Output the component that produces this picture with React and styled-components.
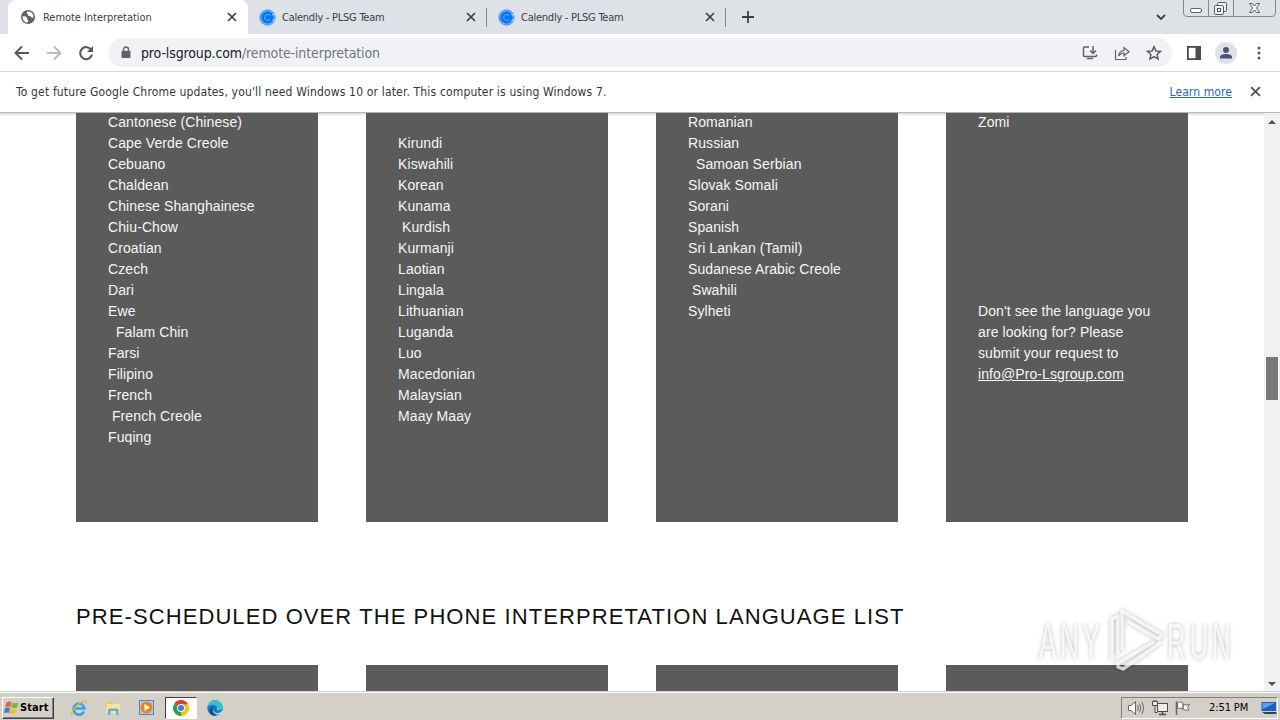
import styled, { createGlobalStyle } from 'styled-components'

const columns = [
  {
    lines: [
      'Cantonese (Chinese)', 'Cape Verde Creole', 'Cebuano', 'Chaldean', 'Chinese Shanghainese',
      'Chiu-Chow', 'Croatian', 'Czech', 'Dari', 'Ewe', '  Falam Chin', 'Farsi', 'Filipino',
      'French', ' French Creole', 'Fuqing',
    ],
  },
  {
    lines: [
      '', 'Kirundi', 'Kiswahili', 'Korean', 'Kunama', ' Kurdish', 'Kurmanji', 'Laotian', 'Lingala',
      'Lithuanian', 'Luganda', 'Luo', 'Macedonian', 'Malaysian', 'Maay Maay',
    ],
  },
  {
    lines: [
      'Romanian', 'Russian', '  Samoan Serbian', 'Slovak Somali', 'Sorani', 'Spanish',
      'Sri Lankan (Tamil)', 'Sudanese Arabic Creole', ' Swahili', 'Sylheti',
    ],
  },
  {
    lines: [
      'Zomi', '', '', '', '', '', '', '', '', "Don't see the language you",
      'are looking for? Please', 'submit your request to',
    ],
    mail: 'info@Pro-Lsgroup.com',
  },
]

const CloseIcon = ({ size = 10, color = '#3c4043', width = 1.7 }) => (
  <svg width={size} height={size} viewBox="0 0 10 10">
    <path d="M1 1L9 9M9 1L1 9" stroke={color} strokeWidth={width} fill="none" />
  </svg>
)

const GlobeIcon = () => (
  <svg width="16" height="16" viewBox="0 0 16 16">
    <circle cx="8" cy="8" r="7" fill="#5f6368" />
    <path d="M2.600 7.200l3.200.3 1.400 1.600-.2 1.300 1.300.6-.6 2.600C4.700 13.500 2.400 11 2.600 7.200zM7.400 2.500l-.8 1.700 1.300 1 .2 1.500 2.100.3 1 1.300 2.200.4c.6-3.600-2.300-6.400-6-6.200z" fill="#fff" />
  </svg>
)

const CalendlyIcon = () => (
  <svg width="17" height="17" viewBox="0 0 17 17">
    <circle cx="8.500" cy="8.500" r="7.600" fill="#8fc2fb" stroke="#1683f8" strokeWidth="0.900" />
    <circle cx="8.500" cy="8.500" r="6.200" fill="#0a73f5" />
    <path d="M11.300 6.500C9.900 5 5.700 4.900 5.500 8.500c.2 3.600 4.400 3.500 5.800 2" fill="none" stroke="#35a4ff" strokeWidth="1.300" />
    <path d="M13.500 5.800h3M13.500 11.200h3" stroke="#cfe3fb" strokeWidth="1" />
  </svg>
)

const ArrowIcon = ({ color, flip }) => (
  <svg width="16" height="16" viewBox="0 0 16 16">
    <path d={flip ? 'M1 8H14M8 1.500L14.500 8L8 14.500' : 'M15 8H2M8 1.500L1.500 8L8 14.500'} stroke={color} strokeWidth="1.900" fill="none" />
  </svg>
)

const ReloadIcon = () => (
  <svg width="16" height="16" viewBox="0 0 16 16">
    <path d="M13.300 5A6 6 0 1 0 14 9.500" stroke="#54585c" strokeWidth="2" fill="none" />
    <path d="M15 1V7H9z" fill="#54585c" />
  </svg>
)

const LockIcon = () => (
  <svg width="10" height="13" viewBox="0 0 10 13">
    <path d="M2.500 5V3.500a2.500 2.500 0 0 1 5 0V5" stroke="#5f6368" strokeWidth="1.400" fill="none" />
    <rect x="0.500" y="4.700" width="9" height="7.300" rx="1" fill="#5f6368" />
  </svg>
)

const InstallIcon = () => (
  <svg width="16" height="16" viewBox="0 0 16 16" fill="none" stroke="#5f6368" strokeWidth="1.500">
    <path d="M7 2H2.500Q1.500 2 1.500 3V10.500Q1.500 11.500 2.500 11.500H13.500Q14.500 11.500 14.500 10.500V9.500" />
    <path d="M11 1V8M8 5.500L11 8.500L14 5.500M5 13.500H11" />
  </svg>
)

const ShareIcon = () => (
  <svg width="16" height="16" viewBox="0 0 16 16" fill="none" stroke="#5f6368" strokeWidth="1.200">
    <path d="M1.500 5V14.500H12V12" />
    <path d="M4.500 11C5 7.500 7 5.700 10 5.500V2.500L15 6.700L10 10.700V8C7.500 8 6 8.800 4.500 11z" />
  </svg>
)

const StarIcon = () => (
  <svg width="16" height="16" viewBox="0 0 16 16">
    <path d="M8 1.600L9.900 6L14.600 6.400L11 9.500L12.100 14.100L8 11.600L3.900 14.100L5 9.500L1.400 6.400L6.100 6z" fill="none" stroke="#54585c" strokeWidth="1.400" />
  </svg>
)

const PanelIcon = () => (
  <svg width="14" height="14" viewBox="0 0 14 14">
    <rect x="0.900" y="0.900" width="12.200" height="12.200" fill="#fff" stroke="#4a4d51" strokeWidth="1.800" />
    <rect x="8.500" y="1" width="5" height="12" fill="#4a4d51" />
  </svg>
)

const PersonIcon = () => (
  <svg width="22" height="22" viewBox="0 0 22 22">
    <circle cx="11" cy="11" r="11" fill="#dee1e6" />
    <circle cx="11" cy="8" r="3" fill="#485575" />
    <path d="M5 16.500V15C5 12.800 8.500 12 11 12s6 .8 6 3v1.500z" fill="#485575" />
  </svg>
)

const WindowButtons = () => (
  <svg width="94" height="17" viewBox="0 0 94 17" fill="none" stroke="#85878c">
    <path d="M.5 0V13Q.5 16.500 4 16.500H89Q92.500 16.500 92.500 13V0M25.500 0V16M50.500 0V16" />
    <rect x="7.500" y="8.500" width="11" height="4" rx="1.500" fill="#fff" stroke="#60636a" />
    <g stroke="#55585f" fill="#eef0f3">
      <rect x="34.500" y="2.500" width="9" height="9" rx="1" />
      <rect x="31.500" y="5.500" width="9" height="9" rx="1" />
      <rect x="34.500" y="8.500" width="3" height="3" />
    </g>
    <path d="M66.500 3.500H69.500L71.500 6L73.500 3.500H76.500L73.500 8L76.500 12.500H73.500L71.500 10L69.500 12.500H66.500L69.500 8z" fill="#f6f7f9" stroke="#60636a" />
  </svg>
)

const WindowsFlag = () => (
  <svg width="17" height="16" viewBox="0 0 17 16">
    <path d="M3.500 2.500Q6 .8 8.500 2.300L7.300 7.200Q5 5.800 2.300 7.300z" fill="#e8642a" />
    <path d="M9.300 2.700Q12 4 15.500 2.300L14.200 7.200Q11 8.800 8.100 7.500z" fill="#7ab648" />
    <path d="M2 8.300Q4.500 6.800 7.100 8.200L5.900 13Q3.500 11.700.8 13.200z" fill="#3a7fd0" />
    <path d="M7.900 8.500Q11 9.800 14 8.200L12.700 13Q9.500 14.700 6.700 13.400z" fill="#f5bd2b" />
  </svg>
)

const IeIcon = () => (
  <svg width="18" height="18" viewBox="0 0 18 18" fill="none">
    <path d="M14 12.500A5.500 5.500 0 1 1 14.500 9.500H5" stroke="#37a5e5" strokeWidth="2.700" />
    <path d="M2.500 15.800C-.5 14 5 7.500 9.500 4.500S17.500.7 16.300 4.500" stroke="#e8b632" strokeWidth="1.400" />
  </svg>
)

const FolderIcon = () => (
  <svg width="18" height="18" viewBox="0 0 18 18">
    <path d="M2 3H7L8.500 4.500H15V13H2z" fill="#e8c75e" />
    <path d="M3 5H16V14H1.500z" fill="#f7e39a" />
    <path d="M4 16V11Q4 9.500 5.500 9.500H13Q14.500 9.500 14.500 11V16H12V12H6.500V16z" fill="#62afd8" />
  </svg>
)

const PlayerIcon = () => (
  <svg width="18" height="18" viewBox="0 0 18 18">
    <rect x="1.500" y="1.500" width="14" height="14" fill="#a9cdee" stroke="#5388bd" />
    <circle cx="8.500" cy="8.500" r="6" fill="#ef8218" />
    <path d="M6.500 5L12 8.500L6.500 12z" fill="#fff" />
  </svg>
)

const ChromeIcon = () => (
  <svg width="16" height="16" viewBox="0 0 16 16">
    <path d="M8 8L1.070 4A8 8 0 0 1 14.930 4z" fill="#e33b2e" />
    <path d="M8 8L14.930 4A8 8 0 0 1 8 16z" fill="#fbc116" />
    <path d="M8 8L8 16A8 8 0 0 1 1.070 4z" fill="#2da04b" />
    <path d="M8 4.400H15.100A8 8 0 0 1 8 16L11.100 9.800z" fill="#fbc116" />
    <circle cx="8" cy="8" r="3.900" fill="#fff" />
    <circle cx="8" cy="8" r="3" fill="#3c7df0" />
  </svg>
)

const EdgeIcon = () => (
  <svg width="16" height="16" viewBox="0 0 16 16">
    <circle cx="8" cy="8" r="7.700" fill="#1777cf" />
    <path d="M.4 7.500C1 3 4.300.3 8 .3c4.500 0 7.700 3.200 7.700 6.300 0 2.500-2 3.800-4 3.800-1.500 0-2.500-.6-2-1.400C11 6.500 8.500 4.800 6 4.800 3.500 4.800 1.300 6 .4 7.500z" fill="#36c3c8" />
    <path d="M6.200 8.300c-.6 3 2 5 4.700 4.700 1.700-.2 3-.9 4-2 1 0 .3 1.500-.8 2.500C11 16 4.500 14 6.200 8.300z" fill="#d4d0c8" />
    <path d="M4.300 14.800C.8 12.500 2.600 7 6.500 6.800 4.300 10 6 13.700 9.300 15.600 7.500 16 5.500 15.700 4.300 14.800z" fill="#124f9f" />
  </svg>
)

const SpeakerIcon = () => (
  <svg width="18" height="16" viewBox="0 0 18 16" fill="none" stroke="#6c6a66">
    <path d="M1.500 5.500H4L8.500 1.500V14.500L4 10.500H1.500z" fill="#fff" />
    <path d="M10.500 5Q12 8 10.500 11M12.500 3.500Q15 8 12.500 12.500M14.800 2Q18.300 8 14.800 14" />
  </svg>
)

const NetworkIcon = () => (
  <svg width="16" height="16" viewBox="0 0 16 16" fill="none" stroke="#4f4d49">
    <rect x="5.500" y="3.500" width="10" height="8" fill="#eee" />
    <path d="M7 14.500H14M10.500 12V14" strokeWidth="1.500" />
    <path d="M.5 1.500H5.500V5.500H.5zM3 5.500V12.500H5.500M2 0V1.500M4 0V1.500" fill="#eee" />
  </svg>
)

const FlagIcon = () => (
  <svg width="16" height="16" viewBox="0 0 16 16" fill="#fff" stroke="#6c6a66">
    <path d="M1.500 1.500V15" strokeWidth="1.600" />
    <path d="M2.500 2.500Q5 1 8 3V9Q5 7.500 2.500 8.500zM8 4.500Q11 6 14.500 4L12.500 7.500L14 10Q10.500 11 8 9z" />
  </svg>
)

const DesktopIcon = () => (
  <svg width="16" height="14" viewBox="0 0 16 14">
    <path d="M.5 1H15V10H.5z" fill="#1c5fbf" />
    <path d="M1.500 2H14L1.500 8z" fill="#5aa3ea" />
    <path d="M1 11H15.500V13H4z" fill="#26416b" />
  </svg>
)

const Watermark = () => (
  <WatermarkSvg width="240" height="80" viewBox="0 0 240 80">
    <g fill="#fff" fillOpacity="0.75" fontFamily="'Liberation Sans', Arial, sans-serif" fontSize="50" letterSpacing="7">
      <text transform="translate(9 61) scale(0.52 1)">ANY</text>
      <text transform="translate(137 61) scale(0.52 1)">RUN</text>
    </g>
    <g fill="none" stroke="#fff" strokeOpacity="0.75" strokeWidth="3.500" strokeLinejoin="round">
      <path d="M82 62V21L88 18V56" />
      <path d="M92 52V13L132 37L129 41L97 23" />
      <path d="M131 44L93 71L88 69V65L124 44" />
    </g>
  </WatermarkSvg>
)

const App = () => {
  return (
    <Screen>
      <GlobalStyle />
      <TabStrip>
        <Tab $active>
          <GlobeIcon />
          <TabTitle $active>Remote Interpretation</TabTitle>
          <CloseIcon />
        </Tab>
        <Tab>
          <CalendlyIcon />
          <TabTitle>Calendly - PLSG Team</TabTitle>
          <CloseIcon />
        </Tab>
        <Tab>
          <CalendlyIcon />
          <TabTitle>Calendly - PLSG Team</TabTitle>
          <CloseIcon />
        </Tab>
        <NewTab>
          <svg width="12" height="12" viewBox="0 0 12 12">
            <path d="M6 0V12M0 6H12" stroke="#3c4043" strokeWidth="1.800" />
          </svg>
        </NewTab>
        <TabSearch>
          <svg width="10" height="7" viewBox="0 0 10 7">
            <path d="M1 1L5 5L9 1" fill="none" stroke="#3c4043" strokeWidth="1.800" />
          </svg>
        </TabSearch>
        <WindowButtons />
      </TabStrip>

      <Toolbar>
        <NavButtons>
          <ArrowIcon color="#54585c" />
          <ArrowIcon color="#b9bbbe" flip />
          <ReloadIcon />
        </NavButtons>
        <AddressBar>
          <LockIcon />
          <Url><b>pro-lsgroup.com</b>/remote-interpretation</Url>
          <AddressActions>
            <InstallIcon />
            <ShareIcon />
            <StarIcon />
          </AddressActions>
        </AddressBar>
        <ToolbarActions>
          <PanelIcon />
          <PersonIcon />
          <svg width="4" height="14" viewBox="0 0 4 14" fill="#54585c">
            <circle cx="2" cy="2" r="1.500" />
            <circle cx="2" cy="7" r="1.500" />
            <circle cx="2" cy="12" r="1.500" />
          </svg>
        </ToolbarActions>
      </Toolbar>

      <InfoBar>
        <InfoText>To get future Google Chrome updates, you'll need Windows 10 or later. This computer is using Windows 7.</InfoText>
        <LearnMore>Learn more</LearnMore>
        <CloseIcon size={11} color="#54585c" width={1.8} />
      </InfoBar>

      <Viewport>
        <Page>
          <CardRow>
            {columns.map((column, i) => (
              <Card key={i}>
                {column.lines.map((line, j) => <Line key={j}>{line}</Line>)}
                {column.mail && <Line><MailLink>{column.mail}</MailLink></Line>}
              </Card>
            ))}
          </CardRow>
          <Heading>PRE-SCHEDULED OVER THE PHONE INTERPRETATION LANGUAGE LIST</Heading>
          <CardRow>
            {columns.map((column, i) => <NextCard key={i} />)}
          </CardRow>
        </Page>
        <ScrollBar>
          <ScrollArrow $up />
          <ScrollThumb />
          <ScrollArrow />
        </ScrollBar>
      </Viewport>

      <Taskbar>
        <StartButton><WindowsFlag />Start</StartButton>
        <TaskItem><IeIcon /></TaskItem>
        <TaskItem><FolderIcon /></TaskItem>
        <TaskItem><PlayerIcon /></TaskItem>
        <TaskItem $active><ChromeIcon /></TaskItem>
        <TaskItem><EdgeIcon /></TaskItem>
        <Tray>
          <SpeakerIcon />
          <NetworkIcon />
          <FlagIcon />
          <Clock>2:51 PM</Clock>
          <DesktopIcon />
        </Tray>
      </Taskbar>
      <Watermark />
    </Screen>
  )
}

export default App

const uiFont = "'DejaVu Sans Condensed', 'DejaVu Sans', sans-serif"

const GlobalStyle = createGlobalStyle`
  body {
    margin: 0;
    overflow: hidden;
  }
  * {
    box-sizing: border-box;
  }
  svg {
    flex: none;
    display: block;
  }
`

const Screen = styled.div`
  position: relative;
  width: 1280px;
  height: 720px;
  display: flex;
  flex-direction: column;
  overflow: hidden;
  background-color: #fff;
  font-family: ${uiFont};
`

const TabStrip = styled.div`
  height: 34px;
  flex: none;
  display: flex;
  align-items: flex-start;
  padding: 0 3px 0 8px;
  background: radial-gradient(circle at 0 26px, #dee1e6 8px, #fff 8.5px) 0 26px / 8px 8px no-repeat, #dee1e6;
  background: #dee1e6;
`

const Tab = styled.div`
  width: ${props => props.$active ? 240 : 239}px;
  height: 34px;
  display: flex;
  align-items: center;
  padding: 0 11px 0 ${props => props.$active ? 12 : 11}px;
  gap: ${props => props.$active ? 7 : 6}px;
  border-radius: 8px 8px 0 0;
  background: ${props => props.$active
    ? '#fff'
    : 'linear-gradient(#85888d, #85888d) right 0 top 8px / 1px 19px no-repeat'};
`

const TabTitle = styled.div`
  flex: 1;
  font-size: 11px;
  letter-spacing: ${props => props.$active ? -0.04 : -0.25}px;
  color: #3c4043;
  white-space: nowrap;
`

const NewTab = styled.div`
  height: 34px;
  display: flex;
  align-items: center;
  margin-left: 16px;
  flex: 1;
`

const TabSearch = styled.div`
  height: 34px;
  display: flex;
  align-items: center;
  margin-right: 17px;
`

const Toolbar = styled.div`
  height: 38px;
  flex: none;
  display: flex;
  align-items: center;
  border-bottom: 1px solid #d5d7da;
`

const NavButtons = styled.div`
  width: 108px;
  display: flex;
  gap: 16px;
  padding-left: 14px;
`

const AddressBar = styled.div`
  width: 1064px;
  height: 29px;
  display: flex;
  align-items: center;
  padding: 0 10px 0 13px;
  border-radius: 15px;
  background-color: #f0f2f5;
`

const Url = styled.div`
  flex: 1;
  margin-left: 10px;
  font-size: 14px;
  letter-spacing: -0.13px;
  color: #73777c;
  white-space: nowrap;

  b {
    font-weight: normal;
    color: #202124;
  }
`

const AddressActions = styled.div`
  display: flex;
  gap: 16px;
`

const ToolbarActions = styled.div`
  display: flex;
  align-items: center;
  padding-left: 15px;

  svg:nth-child(2) {
    margin: 0 20px 0 14px;
  }
`

const InfoBar = styled.div`
  height: 41px;
  flex: none;
  display: flex;
  align-items: center;
  padding: 0 19px 1px 16px;
  border-bottom: 1px solid #b5b6b7;
`

const InfoText = styled.div`
  flex: 1;
  font-size: 12px;
  letter-spacing: 0.165px;
  color: #333639;
  white-space: nowrap;
`

const LearnMore = styled.div`
  margin-right: 18px;
  font-size: 12px;
  letter-spacing: 0.1px;
  color: #2a65c0;
  text-decoration: underline;
`

const Viewport = styled.div`
  height: 578px;
  flex: none;
  display: flex;
  overflow: hidden;
  background: linear-gradient(#d8d8d8, #fff 3px);
`

const Page = styled.div`
  flex: 1;
  padding-left: 76px;
  font-family: 'Liberation Sans', Arial, sans-serif;
`

const CardRow = styled.div`
  display: flex;
  gap: 48px;
`

const Card = styled.div`
  width: 242px;
  height: 409px;
  padding: 0 32px;
  background-color: #5b5b5b;

  > :first-child {
    margin-top: -1px;
  }
`

const NextCard = styled(Card)`
  height: 27px;
`

const Line = styled.div`
  height: 21px;
  line-height: 21px;
  font-size: 14px;
  letter-spacing: 0.09px;
  color: #f6f6f6;
  white-space: pre;
`

const MailLink = styled.span`
  text-decoration: underline;
`

const Heading = styled.div`
  height: 143px;
  padding-top: 81px;
  font-size: 22px;
  line-height: 28px;
  letter-spacing: 1.09px;
  color: #111;
  white-space: nowrap;
`

const ScrollBar = styled.div`
  width: 16px;
  display: flex;
  flex-direction: column;
  align-items: center;
  justify-content: space-between;
  padding: 7px 0 5px;
  background-color: #f1f1f1;
`

const ScrollArrow = styled.div`
  border: 4px solid transparent;
  border-top-width: ${props => props.$up ? 0 : 4}px;
  border-bottom-width: ${props => props.$up ? 4 : 0}px;
  border-${props => props.$up ? 'bottom' : 'top'}-color: #505050;
`

const ScrollThumb = styled.div`
  width: 12px;
  height: 43px;
  margin-top: -50px;
  background-color: #787878;
`

const Taskbar = styled.div`
  flex: 1;
  display: flex;
  align-items: center;
  padding: 3px 2px 0;
  border-top: 1px solid #d4d0c8;
  box-shadow: inset 0 1px 0 #fff;
  background-color: #d4d0c8;
`

const StartButton = styled.div`
  width: 52px;
  height: 22px;
  display: flex;
  align-items: center;
  margin-right: 9px;
  border: 1px solid;
  border-color: #fff #404040 #404040 #fff;
  box-shadow: inset -1px -1px 0 #808080;
  font-size: 11px;
  font-weight: bold;
  letter-spacing: 0.1px;
  color: #000;
`

const TaskItem = styled.div`
  width: 32px;
  height: 22px;
  display: flex;
  align-items: center;
  justify-content: center;
  margin-right: 2px;
  border: 1px solid;
  border-color: ${props => props.$active ? '#404040 #fff #fff #404040' : 'transparent'};
  background-color: ${props => props.$active ? '#fff' : 'transparent'};
`

const Tray = styled.div`
  width: 157px;
  height: 22px;
  display: flex;
  align-items: center;
  gap: 7px;
  margin-left: auto;
  padding-left: 5px;
  border: 1px solid;
  border-color: #808080 #fff #fff #808080;
`

const Clock = styled.div`
  width: 42px;
  margin: 0 3px 0 11px;
  font-size: 11px;
  letter-spacing: -0.1px;
  color: #000;
  white-space: nowrap;
`

// floats over the page and the lower cards
const WatermarkSvg = styled.svg`
  position: absolute;
  left: 1030px;
  top: 598px;
  filter: drop-shadow(0 0 2px rgba(0, 0, 0, 0.35));
`
